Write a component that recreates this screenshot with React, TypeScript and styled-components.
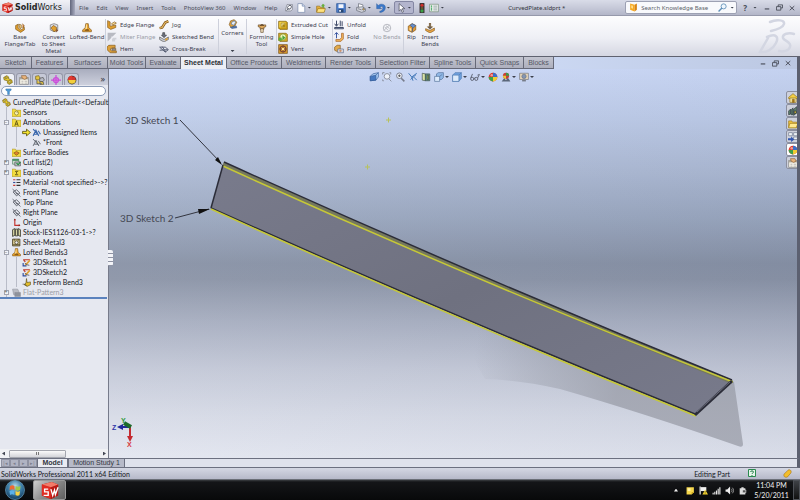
import React from "react";
import styled, { createGlobalStyle, css } from "styled-components";

const Global = createGlobalStyle`
  * { box-sizing: border-box; }
  html, body { margin: 0; padding: 0; background: #0b0c0e; }
  body { font-family: "Noto Sans", "Liberation Sans", sans-serif; font-size: 6px; color: #33363f; }
  button, input { font: inherit; color: inherit; margin: 0; padding: 0; border: 0; background: none; }
  ul { list-style: none; margin: 0; padding: 0; }
  svg { display: block; }
`;

/* ---------- icons ---------- */

const gold = "#e0a030";
const brown = "#7d5316";
const dark = "#474b57";

const glyphs: Record<string, React.ReactNode> = {
  flange: (
    <g stroke={brown} strokeWidth="1">
      <path d="M1 4l4-2v6l4 3 4-2V6l2 1v4l-6 4-8-5z" fill={gold} />
      <path d="M6 2l4 1v5L8 9z" fill="#f7d88a" />
      <path d="M12 1l3 4-3 2" fill="#d87a2c" />
    </g>
  ),
  convert: (
    <g strokeWidth="1">
      <path d="M2 3l6-2 6 2v8l-6 3-6-3z" fill="#d9d9df" stroke="#666" />
      <path d="M3 8l4-4 5 3v5l-4 2z" fill={gold} stroke={brown} />
      <path d="M11 9l4 3-4 3" fill="#8a5a3a" />
    </g>
  ),
  loft: (
    <g stroke={brown} strokeWidth="1">
      <path d="M6 1h4l1 7 4 3v3H1v-3l4-3z" fill="#e9a32e" />
      <path d="M7 2h1v9H5z" fill="#ffe29a" stroke="none" />
      <path d="M5 12a3 2 0 016 0z" fill="#8a5310" />
    </g>
  ),
  edge: (
    <g stroke={brown} strokeWidth="1">
      <path d="M1 1l4 2v7l9-2v4l-8 3-5-3z" fill={gold} />
      <path d="M7 6l5-3 3 2-6 3z" fill="#f9dc92" />
    </g>
  ),
  miter: (
    <g fill="#b8bac2">
      <path d="M1 1h14L9 7H7v2l-6 6z" />
      <path d="M10 9h5v3h-2v3H8v-4z" fill="#cfd1d8" />
    </g>
  ),
  hem: (
    <g stroke={brown} strokeWidth="1">
      <path d="M6 2a5 5 0 00-4 9l3 3h10v-3H7L5 8l4-2h4V2z" fill="#dda03a" />
      <path d="M8 7h6v3H8z" fill="#8b93a8" />
    </g>
  ),
  jog: (
    <g fill="none" strokeLinejoin="round">
      <path d="M1 13l4-1 5-8 5-2" stroke={brown} strokeWidth="4" />
      <path d="M1 13l4-1 5-8 5-2" stroke="#e6b965" strokeWidth="2" />
    </g>
  ),
  bend: (
    <g strokeWidth="1">
      <path d="M6 1h3v4h3l-4 4-4-4h2z" fill="#6e7485" stroke="#333" />
      <path d="M1 8l7 4 7-4v4l-7 4-7-4z" fill="#c9cbd2" stroke="#555" />
      <path d="M10 11l4-2v3l-4 2z" fill={gold} />
    </g>
  ),
  cross: (
    <g fill="none" stroke="#525a70" strokeWidth="1.5">
      <path d="M1 5h9l5 4-5 4L1 5zM1 10l13-1M5 4l6 9" />
    </g>
  ),
  corners: (
    <g strokeWidth="1">
      <path d="M2 9l2-6 6-2 4 4-3 6-6 3z" fill="#e2a43d" stroke={brown} />
      <path d="M5 8l2-4 4-1 1 3-3 4z" fill="#e7eef9" stroke="#4671a5" />
      <path d="M4 13l9-2 1 3-8 1z" fill="#577bb0" stroke="#35558a" />
    </g>
  ),
  forming: (
    <g stroke="#5d4222" strokeWidth="1">
      <path d="M2 3h12v3l-3 1v3H5V7L2 6z" fill="#dca75b" />
      <path d="M6 9h4v6H6z" fill="#f3e3c3" />
      <path d="M5 4l3-2 3 2z" fill="#72593b" />
    </g>
  ),
  cut: (
    <g strokeWidth="1">
      <path d="M1 2h12l2 2v11H3l-2-2z" fill="#c89b18" stroke="#765a08" />
      <path d="M2 3h10v9H2z" fill="#f4d549" />
      <path d="M5 5h6v6H5z" fill="#fff6b8" stroke="#8d6c0e" />
      <path d="M7 7h4v4H7z" fill="#a8830e" />
    </g>
  ),
  hole: (
    <g strokeWidth="1">
      <path d="M1 2h12l2 2v11H3l-2-2z" fill="#d6ab26" stroke="#765a08" />
      <circle cx="8" cy="8" r="5" fill="#eff4b7" stroke="#7c8b22" />
      <path d="M7 5l5 4-5 4z" fill="#48a23a" />
      <path d="M1 9h5v5H1z" fill="#5cac3e" />
    </g>
  ),
  vent: (
    <g strokeWidth="1">
      <path d="M1 1h14v14H1z" fill="#d99b2b" stroke="#6f4610" />
      <circle cx="8" cy="8" r="5" fill="none" stroke="#633" strokeWidth="1.5" />
      <path d="M3 8h10M8 3v10" stroke="#633" strokeWidth="1.5" />
      <circle cx="8" cy="8" r="2" fill="#ffe39a" />
    </g>
  ),
  unfold: (
    <g strokeWidth="1.5" fill="none" stroke="#34405e">
      <path d="M4 1v8M1 6l3 4 3-4M10 1v9M13 2v8" />
      <path d="M1 12h14v2H1z" fill="#dbe2f1" />
    </g>
  ),
  fold: (
    <g strokeWidth="1.5" fill="none">
      <path d="M4 10V1M1 4l3-3 3 3" stroke="#2e4c9b" />
      <path d="M3 12h6l3-3V2h3v9l-4 4H3z" fill="#f0b45a" stroke="#a15a20" strokeWidth="1" />
    </g>
  ),
  flatten: (
    <g strokeWidth="1">
      <path d="M1 5l4-3h5v7l-5 3-4-2z" fill="#e3aa4c" stroke={brown} />
      <path d="M6 8h9v6H6z" fill="#dfe3ee" stroke="#55607d" />
      <path d="M8 11h5M10 9v4" stroke="#c36a2b" />
    </g>
  ),
  nobends: (
    <g fill="none" stroke="#b4b6be" strokeWidth="1.5">
      <circle cx="8" cy="8" r="6" />
      <path d="M3 12L12 3M4 6l6 6M6 4l6 5" />
    </g>
  ),
  rip: (
    <g strokeWidth="1">
      <path d="M2 5l6-4 6 3v7l-6 4-6-3z" fill="#e29a36" stroke={brown} />
      <path d="M8 1l6 3-5 5-1 5 1-7-4-3z" fill="#668fcc" stroke="#35558a" />
      <path d="M4 7l3 2v4l-3-2z" fill="#ffe1a0" />
    </g>
  ),
  insert: (
    <g stroke={brown} strokeWidth="1">
      <path d="M7 0h2v6h3l-4 4-4-4h3z" fill="#5a5f6e" />
      <path d="M1 9l7 3 7-4v4l-7 4-7-4z" fill="#eaa545" />
    </g>
  ),
  pin: (
    <g stroke="#6a6e7a" strokeWidth="1">
      <path d="M4 1h11v10l-3 3H1v-3z" fill="#dcdee6" />
      <path d="M8 3h4l1 3-3 4H6L5 7z" fill="#fff" stroke="#444855" strokeWidth="1.5" />
      <path d="M7 9l-4 4" stroke="#444855" strokeWidth="1.5" />
    </g>
  ),
  page: (
    <g strokeWidth="1">
      <path d="M3 1h7l4 4v10H3z" fill="#fff" stroke="#6c7fa3" />
      <path d="M10 1v4h4" fill="#cfdcf3" stroke="#6c7fa3" />
    </g>
  ),
  open: (
    <g strokeWidth="1">
      <path d="M1 5h5l1 2h6v7H1z" fill="#e7b03b" stroke="#96701c" />
      <path d="M3 9h12l-2 6H1z" fill="#ffe27d" stroke="#96701c" />
      <path d="M8 5l3-4 4 3h-2v3h-3V5z" fill="#66ae3f" />
    </g>
  ),
  save: (
    <g strokeWidth="1">
      <path d="M1 1h14v14H1z" fill="#4d7fce" stroke="#28508f" />
      <path d="M4 2h8v6H4z" fill="#f3f6fc" />
      <path d="M4 10h8v5H4z" fill="#28466f" />
      <path d="M5 11h3v3H5z" fill="#dfe7f5" />
    </g>
  ),
  print: (
    <g stroke="#5b606c" strokeWidth="1">
      <path d="M4 1l7 2v5H4z" fill="#fff" />
      <path d="M1 7l9-1 5 3v4l-6 2-8-3z" fill="#d4d6de" />
      <path d="M3 9l6 2" />
      <circle cx="12" cy="10" r="1.5" fill="#e4ac3b" />
    </g>
  ),
  undo: (
    <path d="M1 1v8h8L6 6.500C8 5 11 5 11 8c0 3-3 5-5 5v2c5 0 9-3 9-8S8 0 3.500 4z" fill="#3b78c9" stroke="#235494" strokeWidth=".6" />
  ),
  cursor: <path d="M5 1v12l3-3 2 5 2-1-2-5h4z" fill="#fff" stroke="#3a3d49" strokeWidth="1" />,
  traffic: (
    <g>
      <rect x="4" y="0" width="8" height="16" rx="1" fill="#3e3638" />
      <circle cx="8" cy="3.500" r="2.500" fill="#d0302c" />
      <circle cx="8" cy="8" r="1.600" fill="#75632c" />
      <circle cx="8" cy="12.500" r="2.500" fill="#3ba045" />
    </g>
  ),
  options: (
    <g>
      <path d="M1 2h14v12H1z" fill="#eef3ee" stroke="#6c8470" />
      <path d="M3 5h2M3 8h2M3 11h2" stroke="#2b9a50" strokeWidth="2" />
      <path d="M7 5h6M7 8h6M7 11h6" stroke="#6d7a86" />
    </g>
  ),
  book: (
    <g>
      <path d="M2 1l8 2v12l-8-3z" fill="#f7a91f" />
      <path d="M10 3l4-2v11l-4 3z" fill="#d98413" />
      <path d="M4 4l3 1v5l-3-1z" fill="#ffe097" />
    </g>
  ),
  lens: (
    <g fill="none" stroke="#5f8fb8">
      <circle cx="10" cy="6" r="4.500" strokeWidth="1.500" fill="#eef6fd" />
      <path d="M7 9l-6 6" strokeWidth="2.500" />
    </g>
  ),
  min: <path d="M2 9h12v3H2z" fill={dark} />,
  restore: (
    <g fill="none" stroke={dark} strokeWidth="2">
      <path d="M5 6V2h10v7h-4M1 6h10v8H1z" />
    </g>
  ),
  close: <path d="M2 3l12 11M14 3L2 14" stroke={dark} strokeWidth="2.500" />,
  part: (
    <g stroke="#69580e" strokeWidth="1">
      <path d="M1 4l5-3 3 2v3l5 2 1 4-5 3-3-2V9L2 8z" fill="#e9cb2e" />
      <path d="M3 4l3-1 1 2-3 1zM9 9l3 0 1 3-3 1z" fill="#fff3a3" />
    </g>
  ),
  property: (
    <g strokeWidth="1">
      <path d="M1 4h14v11H1z" fill="#f5f1e7" stroke="#777" />
      <path d="M1 4h14v3H1z" fill="#aaa69c" />
      <path d="M4 1h7l2 4-4 2-4-2z" fill="#e9b47b" stroke="#8a5f35" />
      <path d="M4 10h3M4 13h3M9 10h4M9 13h4" stroke="#999" />
    </g>
  ),
  config: (
    <g strokeWidth="1">
      <path d="M1 2l5-1 2 4-2 3-5-1z" fill="#e4c440" stroke="#6b5c16" />
      <path d="M8 5l5-1 2 4-3 3-5-1z" fill="#b9bcc6" stroke="#444" />
      <path d="M3 8v6h8M8 10l5 1 1 4H8z" fill="#e4c440" stroke="#444" />
    </g>
  ),
  dim: (
    <g stroke="#c850d8" strokeWidth="2" fill="#e9a0f0">
      <circle cx="8" cy="8" r="4" />
      <path d="M8 0v16M0 8h16" />
    </g>
  ),
  ball: (
    <g>
      <circle cx="8" cy="8" r="7" fill="#e0392e" />
      <path d="M8 8V1a7 7 0 017 7z" fill="#3a70c9" />
      <path d="M8 8h7a7 7 0 01-7 7z" fill="#f0ce33" />
      <path d="M8 8v7a7 7 0 01-7-7z" fill="#3ea04b" />
      <circle cx="6" cy="5" r="2" fill="#fff" opacity=".5" />
    </g>
  ),
  display: (
    <g>
      <circle cx="8" cy="8" r="7" fill="#2d2a2a" />
      <path d="M8 8V1a7 7 0 00-7 7z" fill="#e03a30" />
      <path d="M8 8h6a6 6 0 01-12 0z" fill="#f3cf3c" />
      <path d="M8 8V2a6 6 0 016 6z" fill="#d7342c" />
    </g>
  ),
  funnel: <path d="M2 2h12v3l-4 3v7H6V8L2 5z" fill="#4f9bd6" stroke="#2b6aa5" strokeWidth="1" />,
  folder: (
    <g>
      <path d="M0 2h6l1 2h9v11H0z" fill="#f2dc3e" stroke="#a78f16" strokeWidth="1" />
      <path d="M5 14l3-9 3 9M6 11h4" fill="none" stroke="#554b12" strokeWidth="1.500" />
    </g>
  ),
  sensor: (
    <g>
      <path d="M0 2h6l1 2h9v11H0z" fill="#f2dc3e" stroke="#a78f16" strokeWidth="1" />
      <circle cx="8" cy="9" r="3.500" fill="#fff8b8" stroke="#6b5c14" />
      <path d="M8 9l2-2" stroke="#6b5c14" />
    </g>
  ),
  surface: (
    <g>
      <path d="M0 2h6l1 2h9v11H0z" fill="#f2dc3e" stroke="#a78f16" strokeWidth="1" />
      <path d="M3 9l5-3 5 3-5 4z" fill="#dd8428" stroke="#6b4314" />
    </g>
  ),
  sigma: (
    <g>
      <path d="M0 2h6l1 2h9v11H0z" fill="#f2dc3e" stroke="#a78f16" strokeWidth="1" />
      <path d="M11 6H6l3 3-3 3h5" fill="none" stroke="#554b12" strokeWidth="1.500" />
    </g>
  ),
  arrow: <path d="M1 6h7V2l7 6-7 6v-4H1z" fill="#f5e32e" stroke="#5e560e" strokeWidth="1.500" />,
  note: (
    <g fill="none" strokeWidth="2" stroke="#3a67ad">
      <path d="M2 2l10 11M2 14l5-10 5 10M4 11h6M11 5l4 6" />
    </g>
  ),
  noteDark: (
    <g fill="none" strokeWidth="1.500" stroke="#50555f">
      <path d="M2 2l10 11M2 14l5-10 5 10M4 11h6M11 5l4 6" />
    </g>
  ),
  cutlist: (
    <g strokeWidth="1">
      <path d="M1 2h11v9H1z" fill="#cfe3d4" stroke="#356f4b" />
      <path d="M1 2h11v3H1z" fill="#3f8a5c" />
      <path d="M5 7h10v7H5z" fill="#b9bdc8" stroke="#444" />
      <path d="M8 9l3 3 4-5" fill="none" stroke="#1d8b39" strokeWidth="2" />
    </g>
  ),
  material: (
    <g strokeWidth="2">
      <path d="M2 3h4M2 13h4" stroke="#c93a32" />
      <path d="M2 8h4" stroke="#2e4c9b" />
      <path d="M8 3h7M8 8h7M8 13h7" stroke="#333" />
    </g>
  ),
  plane: (
    <g fill="none" stroke="#4f535e" strokeWidth="1.500">
      <path d="M2 7l6-4 6 6-6 5zM1 2l14 13M6 8l3 3 2-2" />
    </g>
  ),
  origin: (
    <g fill="none" strokeWidth="2">
      <path d="M5 2v11h9" stroke="#c2312d" />
      <path d="M5 1l-2 3h4zM15 13l-3-2v4z" fill="#8a2320" />
    </g>
  ),
  stock: (
    <g stroke="#3b3b31" strokeWidth="1.500">
      <path d="M1 3l4-2v12l-4 2zM6 2h4v12H6zM11 1l4 2v12l-4-2z" fill="#d8d6a4" />
    </g>
  ),
  sheet: (
    <g stroke="#4a3f21" strokeWidth="1.500">
      <path d="M1 2h13v12H1z" fill="#d8cb90" />
      <circle cx="8" cy="8" r="3" fill="#eee" />
      <path d="M4 2v3M11 2v3M2 12h12" />
    </g>
  ),
  sketch: (
    <g fill="none" strokeWidth="2">
      <path d="M2 3h12M3 4l3 3" stroke="#c0392b" />
      <path d="M6 13L14 4" stroke="#e0a030" strokeWidth="3" />
      <path d="M5 9l4 3 4 1" stroke="#555" strokeWidth="1.500" />
      <path d="M1 14h7M2 9v5" stroke="#2e4c9b" />
    </g>
  ),
  freeform: (
    <g stroke="#4f4312" strokeWidth="1">
      <path d="M8 1l1 7 6-1v5l-6 3-5-3 3-3z" fill="#e3bd2b" />
      <path d="M1 11h5l2 3" fill="none" stroke="#333" />
    </g>
  ),
  flat: (
    <g fill="#b9bbc3" stroke="#8c8f99" strokeWidth="1">
      <path d="M1 2h9l2 4v6H3z" />
      <path d="M5 8h10v7H5z" fill="#8f929b" />
    </g>
  ),
  section: (
    <g stroke="#2e5794" strokeWidth="1">
      <path d="M2 7l4-4 9-2v7l-4 5-9 1z" fill="#a9cbf2" />
      <path d="M2 7l9-2v8l-9 1z" fill="#4679c0" />
      <path d="M11 5l4-4" />
    </g>
  ),
  zoomFit: (
    <g fill="none" stroke="#8a8f9d" strokeWidth="1.500">
      <circle cx="8" cy="7" r="4.500" fill="#eef2fa" />
      <path d="M11 11l4 4M1 1h3M1 1v3M12 1h2v3M1 12v2h2" />
    </g>
  ),
  zoomArea: (
    <g fill="none" stroke="#777c8c" strokeWidth="1.500">
      <circle cx="7" cy="6" r="4.500" fill="#eef2fa" />
      <path d="M10 10l5 5" strokeWidth="2.500" />
      <path d="M5 6h4M7 4v4" stroke="#555" />
    </g>
  ),
  prev: (
    <g fill="none" stroke="#3d73b4" strokeWidth="1.500">
      <path d="M1 2l5 6 8-6M6 8l2 6M9 8l5 5M4 12l9-8" />
    </g>
  ),
  cutview: (
    <g stroke="#3a4a45" strokeWidth="1">
      <path d="M2 2l5 1v11l-5-1z" fill="#d9e3a6" />
      <path d="M7 3h7v11H7z" fill="#5d8b7b" />
      <path d="M10 5h2v7h-2z" fill="#b9c94a" />
    </g>
  ),
  cube: (
    <g stroke="#4b76ad" strokeWidth="1">
      <path d="M1 5l4-4h10v9l-4 5H1z" fill="#6fa0de" />
      <path d="M1 5h10v10H1z" fill="#dceafb" />
      <path d="M11 5l4-4" />
    </g>
  ),
  cubes: (
    <g stroke="#4b6a94" strokeWidth="1">
      <path d="M4 3l3-2h8v8l-3 3H4z" fill="#8fb7e6" />
      <path d="M1 7h8v8H1z" fill="#dceafb" />
      <path d="M9 7l4-3" />
    </g>
  ),
  glasses: (
    <g fill="none" stroke="#5d6272" strokeWidth="1.500">
      <circle cx="3.500" cy="11" r="2.500" />
      <circle cx="10" cy="11" r="2.500" />
      <path d="M1 10L4 3M12 10l3-6-3 1M6 10h2" />
    </g>
  ),
  scene: (
    <g>
      <circle cx="8" cy="6" r="5" fill="#c94137" />
      <path d="M8 6V1a5 5 0 015 5z" fill="#3b9a49" />
      <path d="M8 6H3a5 5 0 005 5z" fill="#e8c63a" />
      <path d="M1 15l4-5 3 3 3-4 4 6z" fill="#5a6678" />
    </g>
  ),
  monitor: (
    <g stroke="#6b6f79" strokeWidth="1">
      <path d="M1 2h14v10H1z" fill="#e7d6b9" />
      <circle cx="8" cy="7" r="3.500" fill="#8296b5" />
      <path d="M5 14h6" strokeWidth="2" />
    </g>
  ),
  home: (
    <g stroke="#8a6a17" strokeWidth="1">
      <path d="M1 7l7-6 7 6v2H1z" fill="#f4cf45" />
      <path d="M3 8h10v7H3z" fill="#f7e7a5" />
      <path d="M7 10h3v5H7z" fill="#a97514" />
    </g>
  ),
  library: (
    <g stroke="#25303a" strokeWidth="1">
      <path d="M1 8l3-3v8l-3 1zM5 6l3-3v11H5zM9 5l5-4v10l-5 4z" fill="#5d7f6b" />
      <path d="M10 8h3v4h-3z" fill="#e7c33a" />
    </g>
  ),
  folderOpen: (
    <g stroke="#9c7a17" strokeWidth="1">
      <path d="M1 3h5l1 2h7v9H1z" fill="#eec13f" />
      <path d="M3 7h13l-3 7H1z" fill="#ffe88f" />
    </g>
  ),
  palette: (
    <g>
      <path d="M1 1h6v5H1zM9 1h6v5H9zM9 8h6v4H9z" fill="#eef2f6" stroke="#657089" />
      <path d="M0 10h5V7l5 5-5 4v-3H0z" fill="#3156b0" />
    </g>
  ),
  question: (
    <g>
      <path d="M1 1h14v14H1z" fill="#e6f5ea" stroke="#2b8a4f" strokeWidth="2" />
      <path d="M5 6c0-3 6-3 6 0 0 2-3 2-3 4M8 12v2" fill="none" stroke="#1f7d44" strokeWidth="2" />
    </g>
  ),
  tag: <path d="M2 9l7-7c3-2 7 1 5 5l-6 7c-4 2-8-1-6-5z" fill="#f3be2c" stroke="#a06c0c" strokeWidth="1" />,
  sticky: (
    <g>
      <path d="M1 2h13v9l-4 4H1z" fill="#f5d64b" />
      <path d="M3 4h5v5H3z" fill="#fff3a8" />
      <path d="M10 15v-4h4z" fill="#b8920f" />
    </g>
  ),
  flag: (
    <g>
      <path d="M2 1v14" stroke="#fff" strokeWidth="2" />
      <path d="M3 2h10v7H3z" fill="#f1f1f1" />
      <path d="M11 6l5 9H6z" fill="#f5d32c" />
      <path d="M11 9v3M11 13v1" stroke="#333" />
    </g>
  ),
  signal: <path d="M1 12h2v3H1zM4 10h2v5H4zM7 8h2v7H7zM10 5h2v10h-2zM13 2h2v13h-2z" fill="#e8e8e8" />,
  sound: (
    <g>
      <path d="M1 6h3l5-5v14l-5-5H1z" fill="#eee" />
      <path d="M11 5c2 2 2 4 0 6M13 3c3 3 3 7 0 10" fill="none" stroke="#bbb" strokeWidth="1.300" />
    </g>
  ),
  battery: (
    <g>
      <path d="M3 4h3V2h4v2h3v11H3z" fill="#ddd" />
      <path d="M8 7h6v5H8z" fill="#555" stroke="#eee" />
    </g>
  ),
};

const Glyph = styled.svg<{ $size: number }>`
  flex: none;
  width: ${(p) => p.$size}px;
  height: ${(p) => p.$size}px;
`;

const Icon = ({ name, size = 9 }: { name: string; size?: number }) => (
  <Glyph $size={size} viewBox="0 0 16 16" aria-hidden="true">
    {glyphs[name]}
  </Glyph>
);

const Caret = styled.span`
  flex: none;
  width: 4px;
  height: 2px;
  background: #3c404c;
  clip-path: polygon(0 0, 100% 0, 50% 100%);
`;

/* ---------- shell ---------- */

const Shell = styled.div`
  display: flex;
  flex-direction: column;
  min-height: 100vh;
`;

/* ---------- title bar ---------- */

const TitleBar = styled.header`
  display: flex;
  align-items: center;
  height: 16px;
  background: linear-gradient(#d9dce8, #c3c6d6 60%, #b3b6c8);
  border-bottom: 1px solid #9699ab;
`;

const Brand = styled.div`
  display: flex;
  align-items: center;
  gap: 2px;
  width: 70px;
  height: 100%;
  padding-left: 2px;
  background: linear-gradient(#f1f2f7, #cfd2df);
  font: 8px/15px "DejaVu Sans", sans-serif;
  color: #222;
`;

const BrandDivider = styled.div`
  width: 5px;
  height: 100%;
  background: linear-gradient(90deg, #62667c, #a8abbf);
`;

const Menu = styled.nav`
  display: flex;
  align-items: center;
  gap: 8px;
  padding: 0 2px 0 4px;
  color: #4b4e5a;
`;

const QuickBar = styled.div`
  display: flex;
  align-items: center;
`;

const QuickButton = styled.button<{ $pressed?: boolean; $w: number }>`
  display: flex;
  align-items: center;
  justify-content: space-between;
  width: ${(p) => p.$w}px;
  height: 13px;
  padding: 0 2px 0 1px;
  margin-right: ${(p) => (p.$w > 14 ? 2 : 0)}px;
  ${(p) =>
    p.$pressed &&
    css`
      background: #b3b5cd;
      border: 1px solid #8487a3;
      border-radius: 2px;
    `}
`;

const DocTitle = styled.div`
  flex: 1;
  text-align: center;
  color: #333640;
`;

const Search = styled.label`
  display: flex;
  align-items: center;
  gap: 3px;
  width: 112px;
  height: 13px;
  padding: 0 2px 0 3px;
  background: #f8f9fc;
  border: 1px solid #9da1b3;
  border-radius: 2px;
`;

const SearchInput = styled.input`
  flex: 1;
  min-width: 0;
  outline: 0;
  &::placeholder { color: #5c5f69; opacity: 1; }
`;

const WindowButtons = styled.div<{ $end: number }>`
  display: flex;
  align-items: center;
  gap: 6px;
  padding: 0 ${(p) => p.$end}px 0 6px;
`;

const BareButton = styled.button`
  display: flex;
  align-items: center;
  justify-content: center;
`;

const HelpButton = styled(BareButton)`
  gap: 6px;
  margin-right: 1px;
  font-weight: 700;
  font-size: 8px;
  color: ${dark};
`;

/* ---------- ribbon ---------- */

const Ribbon = styled.div`
  display: flex;
  height: 41px;
  padding: 3px 4px 2px 2px;
  background: linear-gradient(#fdfdfe, #eeeff5 55%, #d5d7e2);
  border-bottom: 1px solid #5f6270;
`;

const BigButton = styled.button<{ $w: number; $muted?: boolean; $top?: number }>`
  display: flex;
  flex-direction: column;
  align-items: center;
  width: ${(p) => p.$w}px;
  padding-top: ${(p) => p.$top ?? 4}px;
  line-height: 7px;
  text-align: center;
  white-space: pre;
  color: ${(p) => (p.$muted ? "#9a9ca6" : "#3c4050")};
  & > svg { margin-bottom: 1px; }
`;

const CaretDrop = styled(Caret)`
  margin-top: 13px;
`;

const Stack = styled.div<{ $w: number }>`
  display: grid;
  grid-template-rows: repeat(3, 12px);
  align-content: center;
  width: ${(p) => p.$w}px;
`;

const SmallButton = styled.button<{ $muted?: boolean }>`
  display: flex;
  align-items: center;
  gap: 3px;
  padding-left: 1px;
  white-space: nowrap;
  color: ${(p) => (p.$muted ? "#9a9ca6" : "#3c4050")};
`;

const Rule = styled.div`
  width: 1px;
  background: #cdd0db;
`;

const Spacer = styled.div`
  flex: 1;
`;

/* ---------- command tabs ---------- */

const TabStrip = styled.div`
  display: flex;
  height: 12px;
  background: linear-gradient(90deg, #cfdcf7 60%, #bcc8e2);
  border-right: 3px solid #5c6070;
`;

const CommandTab = styled.button<{ $w: number; $active?: boolean }>`
  width: ${(p) => p.$w}px;
  font: ${(p) => (p.$active ? 700 : 400)} 7px/11px "Liberation Sans", sans-serif;
  white-space: nowrap;
  color: ${(p) => (p.$active ? "#2c2e36" : "#555866")};
  background: ${(p) => (p.$active ? "#eceef5" : "linear-gradient(#c3c5d0, #adafbd)")};
  border-right: 1px solid #666978;
  border-bottom: 1px solid ${(p) => (p.$active ? "#eceef5" : "#666978")};
`;

/* ---------- workspace ---------- */

const Workspace = styled.main`
  display: flex;
  flex: 1;
`;

const Panel = styled.aside`
  position: relative;
  z-index: 1;
  display: flex;
  flex-direction: column;
  flex: 0 0 109px;
  width: 109px;
  background: #e6e8f0;
  border-right: 1px solid #777b8b;
`;

const PanelTabs = styled.div`
  display: flex;
  align-items: flex-end;
  height: 16px;
  background: linear-gradient(#a9adbe, #cdd0dd);
`;

const PanelTab = styled.button<{ $active?: boolean }>`
  display: flex;
  align-items: center;
  justify-content: center;
  width: 15px;
  height: 12px;
  margin-right: 1px;
  border: 1px solid #9699a9;
  border-bottom: 0;
  border-radius: 3px 3px 0 0;
  background: ${(p) => (p.$active ? "#eef0f6" : "#c6c9d7")};
`;

const More = styled(BareButton)`
  margin-left: auto;
  padding: 0 3px 0 0;
  font-size: 9px;
  line-height: 12px;
`;

const Filter = styled.label`
  display: flex;
  align-items: center;
  gap: 3px;
  height: 10px;
  margin: 1px 2px 1px 1px;
  padding-left: 3px;
  background: #fff;
  border: 1px solid #8c9cb8;
  border-radius: 5px;
`;

const Tree = styled.ul`
  flex: 1;
  padding-left: 1px;
  font: 7px/10px Lato, "Noto Sans", sans-serif;
  color: #15171c;
`;

const TreeRow = styled.li<{ $muted?: boolean }>`
  display: flex;
  align-items: center;
  height: 10px;
  white-space: nowrap;
  color: ${(p) => (p.$muted ? "#9b9da6" : "inherit")};
  & > svg { margin-left: 1px; }
`;

const Label = styled.span`
  margin-left: 2px;
`;

const Guide = styled.span<{ $line?: boolean }>`
  display: flex;
  align-items: center;
  justify-content: center;
  flex: none;
  width: 10px;
  height: 10px;
  background: ${(p) =>
    p.$line ? "linear-gradient(#b9bcc8, #b9bcc8) 5px 0 / 1px 100% no-repeat" : "none"};
`;

const Toggle = styled.button`
  width: 5px;
  height: 5px;
  background: #f3f4f8;
  border: 1px solid #a2a5b1;
  font-size: 5px;
  line-height: 3px;
  color: #555;
`;

const Rollback = styled.li`
  height: 2px;
  margin: 0 1px 0 -1px;
  background: #5b82bd;
`;

const SplitHandle = styled.button`
  position: absolute;
  right: -5px;
  top: 181px;
  width: 5px;
  height: 16px;
  background: repeating-linear-gradient(#f3f4f8 0 3px, #8f93a4 3px 4px);
  border-radius: 0 2px 2px 0;
`;

const ScrollBar = styled.div`
  display: flex;
  align-items: center;
  justify-content: space-between;
  height: 9px;
  padding: 0 2px;
  background: #f0f1f4;
`;

const Thumb = styled.div`
  width: 57px;
  height: 8px;
  margin: 0 auto 0 4px;
  border: 1px solid #a4a6ae;
  border-radius: 1px;
  background: repeating-linear-gradient(90deg, #777 0 1px, transparent 1px 2px) center / 4px 3px no-repeat,
    linear-gradient(#fafafa, #d3d4d9);
`;

const ScrollArrow = styled.button<{ $right?: boolean }>`
  width: 3px;
  height: 4px;
  background: #444854;
  clip-path: ${(p) => (p.$right ? "polygon(0 0, 100% 50%, 0 100%)" : "polygon(100% 0, 0 50%, 100% 100%)")};
`;

const Viewport = styled.section`
  position: relative;
  flex: 1;
  overflow: hidden;
  border-right: 3px solid #5c6070;
  background: linear-gradient(90deg, rgba(255, 255, 255, 0.06), rgba(60, 75, 110, 0.06)),
    linear-gradient(
      #cddaf8 0,
      #bfcdea 12%,
      #adbad4 26%,
      #9aa7bf 38%,
      #8791a5 50%,
      #8a93a6 54%,
      #a7aec0 65%,
      #c3c8d7 77%,
      #d6dae6 89%,
      #e3e6f0 100%
    );
`;

const Scene = styled.svg`
  position: absolute;
  inset: 0;
  width: 100%;
  height: 100%;
`;

const HeadsUp = styled.div`
  position: absolute;
  top: 2px;
  left: 0;
  right: 0;
  display: flex;
  justify-content: center;
`;

const HeadsUpButton = styled.button<{ $drop?: boolean }>`
  display: flex;
  align-items: center;
  gap: 1px;
  width: ${(p) => (p.$drop ? 18 : 13)}px;
  height: 12px;
`;

const TaskPane = styled.div`
  position: absolute;
  right: -3px;
  top: 22px;
  display: grid;
  grid-auto-rows: 13px;
`;

const TaskTab = styled.button<{ $active?: boolean }>`
  display: flex;
  align-items: center;
  justify-content: center;
  width: 14px;
  background: ${(p) => (p.$active ? "#ffffff" : "#ced1dc")};
  border: 1px solid #8b8f9f;
  border-radius: 2px 0 0 2px;
`;

/* ---------- footer ---------- */

const ModelTabs = styled.div`
  display: flex;
  align-items: stretch;
  height: 10px;
  padding-left: 1px;
  background: #dfe2ec;
  border-top: 1px solid #6c7080;
  border-right: 3px solid #5c6070;
  border-bottom: 1px solid #6c7080;
`;

const NavButton = styled.button`
  width: 9px;
  background: #b0b3c2;
  border: 1px solid #8f92a2;
  font-size: 5px;
  line-height: 5px;
  color: #7c7f8e;
`;

const ModelTab = styled.button<{ $active?: boolean; $w: number }>`
  width: ${(p) => p.$w}px;
  font: ${(p) => (p.$active ? 700 : 400)} 7px/8px "Liberation Sans", sans-serif;
  background: ${(p) => (p.$active ? "#e9ebf2" : "#b7bac8")};
  border-left: 1px solid #6c7080;
  border-right: 1px solid #6c7080;
  white-space: nowrap;
`;

const Status = styled.footer`
  display: flex;
  align-items: center;
  height: 11px;
  padding: 0 8px 0 1px;
  background: linear-gradient(#d4d7e3, #b6b9c9);
  font: 7px/10px Lato, "Noto Sans", sans-serif;
  color: #15171c;
`;

const StatusMode = styled.span`
  margin: 0 18px 0 auto;
`;

const StatusIcons = styled.div`
  display: flex;
  gap: 27px;
`;

const TaskBar = styled.div`
  display: flex;
  align-items: center;
  height: 21px;
  background: linear-gradient(#3a3d41, #141518 10%, #08090a);
  border-top: 1px solid #6b6f78;
  color: #f2f2f2;
`;

const StartButton = styled(BareButton)`
  width: 30px;
  margin-right: 3px;
`;

const AppButton = styled(BareButton)`
  width: 33px;
  height: 20px;
  border: 1px solid #999;
  border-radius: 2px;
  background: linear-gradient(135deg, #cfcfcf, #8c8c8c 50%, #5e5e5e);
`;

const Tray = styled.div`
  display: flex;
  align-items: center;
  gap: 4px;
  margin-left: auto;
`;

const TrayUp = styled(BareButton)`
  width: 4px;
  height: 3px;
  margin-right: 4px;
  background: #eee;
  clip-path: polygon(50% 0, 100% 100%, 0 100%);
`;

const Clock = styled.time`
  width: 41px;
  font: 7px/10px Lato, sans-serif;
  text-align: center;
`;

const ShowDesktop = styled.button`
  width: 7px;
  height: 20px;
  margin-left: -3px;
  border: 1px solid #4d5056;
  background: linear-gradient(#3e4146, #111);
`;

/* ---------- data ---------- */

const menus = ["File", "Edit", "View", "Insert", "Tools", "PhotoView 360", "Window", "Help"];

const quick = [
  { icon: "page", label: "New", w: 18 },
  { icon: "open", label: "Open", w: 18 },
  { icon: "save", label: "Save", w: 18 },
  { icon: "print", label: "Print", w: 18 },
  { icon: "undo", label: "Undo", w: 17 },
  { icon: "cursor", label: "Select", w: 20, pressed: true },
  { icon: "traffic", label: "Rebuild", w: 12 },
  { icon: "options", label: "Options", w: 18 },
];

const tabs: [string, number][] = [
  ["Sketch", 32], ["Features", 36], ["Surfaces", 40], ["Mold Tools", 38], ["Evaluate", 35],
  ["Sheet Metal", 46], ["Office Products", 55], ["Weldments", 44], ["Render Tools", 50],
  ["Selection Filter", 54], ["Spline Tools", 46], ["Quick Snaps", 48], ["Blocks", 30],
];

type Node = {
  icon: string;
  label: string;
  depth: number;
  toggle?: "+" | "-";
  marker?: boolean;
  indent?: boolean;
  muted?: boolean;
};

const tree: Node[] = [
  { icon: "part", label: "CurvedPlate (Default<<Default", depth: 0 },
  { icon: "sensor", label: "Sensors", depth: 1 },
  { icon: "folder", label: "Annotations", depth: 1, toggle: "-" },
  { icon: "note", label: "Unassigned Items", depth: 2, marker: true },
  { icon: "noteDark", label: "*Front", depth: 2, indent: true },
  { icon: "surface", label: "Surface Bodies", depth: 1 },
  { icon: "cutlist", label: "Cut list(2)", depth: 1, toggle: "+" },
  { icon: "sigma", label: "Equations", depth: 1, toggle: "+" },
  { icon: "material", label: "Material <not specified>->?", depth: 1 },
  { icon: "plane", label: "Front Plane", depth: 1 },
  { icon: "plane", label: "Top Plane", depth: 1 },
  { icon: "plane", label: "Right Plane", depth: 1 },
  { icon: "origin", label: "Origin", depth: 1 },
  { icon: "stock", label: "Stock-IES1126-03-1->?", depth: 1 },
  { icon: "sheet", label: "Sheet-Metal3", depth: 1 },
  { icon: "loft", label: "Lofted Bends3", depth: 1, toggle: "-" },
  { icon: "sketch", label: "3DSketch1", depth: 2 },
  { icon: "sketch", label: "3DSketch2", depth: 2 },
  { icon: "freeform", label: "Freeform Bend3", depth: 2 },
  { icon: "flat", label: "Flat-Pattern3", depth: 1, toggle: "+", muted: true },
];

const headsUp: [string, string, boolean?][] = [
  ["section", "Zoom"], ["zoomFit", "Zoom to Fit"], ["zoomArea", "Zoom to Area"], ["prev", "Previous View"],
  ["cutview", "Section View"], ["cubes", "View Orientation", true], ["cube", "Display Style", true],
  ["glasses", "Hide/Show Items", true], ["ball", "Edit Appearance"], ["scene", "Apply Scene", true],
  ["monitor", "View Settings", true],
];

const taskTabs = ["home", "library", "folderOpen", "palette", "ball", "property"];

/* ---------- pieces ---------- */

const CubeLogo = ({ size }: { size: number }) => (
  <Glyph $size={size} viewBox="0 0 20 20" aria-hidden="true">
    <path d="M1 4l11-3 7 3v12l-8 4-10-4z" fill="#a5120f" />
    <path d="M1 4l10 3v13L1 16z" fill="#e02c22" />
    <path d="M11 7l8-3v12l-8 4z" fill="#b81a15" />
    <path d="M1 4l11-3 7 3-8 3z" fill="#f37a68" />
    <path d="M8 9H4v3h4v4H3" fill="none" stroke="#fff" strokeWidth="1.500" />
    <path d="M11 9l2 7 2-6 1 5 3-8" fill="none" stroke="#fff" strokeWidth="1.500" />
  </Glyph>
);

const StartOrb = () => (
  <Glyph $size={20} viewBox="0 0 20 20" aria-hidden="true">
    <defs>
      <radialGradient id="orb" cx=".5" cy=".3" r=".7">
        <stop offset="0" stopColor="#b8dcec" />
        <stop offset=".5" stopColor="#3f7fa8" />
        <stop offset="1" stopColor="#123a5c" />
      </radialGradient>
    </defs>
    <circle cx="10" cy="10" r="9.500" fill="url(#orb)" stroke="#6b9fbd" strokeWidth=".7" />
    <path d="M5 6c2-1 3-1 4.500 0v4C8 9 7 9 4.500 10z" fill="#ee6a32" />
    <path d="M10.500 6c2 1 3 1 5 0l-.5 4c-2 1-3 1-4.500 0z" fill="#9fcb45" />
    <path d="M4.500 11c2-1 3-1 5 0v4c-2-1-3-1-4.500 0z" fill="#5bb1ea" />
    <path d="M10.500 11c2 1 3 1 4.500 0l-.5 4c-1 1-2.500 1-4 0z" fill="#f9d343" />
  </Glyph>
);

const Watermark = styled.svg`
  width: 38px;
  height: 36px;
`;

const DsMark = () => (
  <Watermark viewBox="0 0 38 36" aria-hidden="true">
    <g fill="none" stroke="#d3d6e2" strokeWidth="2.500" strokeLinecap="round">
      <path d="M12 3c7-3 15-2 14 2-1 4-9 6-13 7" />
      <path d="M9 18c9-4 12 0 9 6-3 6-9 10-16 9l8-14" />
      <path d="M36 15c-5-2-12 0-11 4 1 3 9 4 7 9-1 4-7 5-11 4" />
    </g>
  </Watermark>
);

const Controls = () => (
  <>
    <BareButton aria-label="Minimize"><Icon name="min" size={6} /></BareButton>
    <BareButton aria-label="Restore"><Icon name="restore" size={7} /></BareButton>
    <BareButton aria-label="Close"><Icon name="close" size={6} /></BareButton>
  </>
);

const Big = ({ icon, text, w, muted, top, drop }: {
  icon: string; text: string; w: number; muted?: boolean; top?: number; drop?: boolean;
}) => (
  <BigButton $w={w} $muted={muted} $top={top}>
    <Icon name={icon} size={10} />
    {text}
    {drop && <CaretDrop />}
  </BigButton>
);

const Trio = ({ w, items }: { w: number; items: [string, string, boolean?][] }) => (
  <Stack $w={w}>
    {items.map(([icon, text, muted]) => (
      <SmallButton key={text} $muted={muted}>
        <Icon name={icon} size={10} />
        {text}
      </SmallButton>
    ))}
  </Stack>
);

const Model = () => (
  <Scene viewBox="109 69 688 389" preserveAspectRatio="xMidYMid slice" role="img" aria-label="Curved plate">
    <defs>
      <linearGradient id="shade" x1="475" x2="620" y1="350" y2="370" gradientUnits="userSpaceOnUse">
        <stop offset="0" stopColor="#9296a2" stopOpacity="0" />
        <stop offset=".5" stopColor="#9599a5" stopOpacity=".4" />
        <stop offset="1" stopColor="#999ca7" stopOpacity=".75" />
      </linearGradient>
      <linearGradient id="face" x1="0" x2="1" y1="0" y2="1">
        <stop offset="0" stopColor="#797b8c" />
        <stop offset=".5" stopColor="#6f7180" />
        <stop offset="1" stopColor="#787a8b" />
      </linearGradient>
    </defs>
    <path d="M450 310L734 382L743 444Q743 448 738 446Q640 412 560 389Q520 380 485 379Q468 350 450 310Z" fill="url(#shade)" />
    <path d="M223 164Q480 281 732 381L695 415Q450 316 211 208Z" fill="url(#face)" />
    <g fill="none" strokeLinejoin="round">
      <path d="M223 164Q480 280 732 382" stroke="#75785f" strokeWidth="4" />
      <path d="M224 162Q480 278 732 380" stroke="#2b2c38" strokeWidth="1.500" />
      <path d="M223 166Q480 283 733 382" stroke="#c6c838" strokeWidth="1.500" />
      <path d="M223 165L211 208" stroke="#2b2c38" strokeWidth="1.500" />
      <path d="M211 208Q450 315 695 414" stroke="#2b2c38" strokeWidth="1.500" />
      <path d="M211 209Q450 317 696 416" stroke="#c6c838" strokeWidth="1.500" />
      <path d="M695 415L732 381" stroke="#2b2c38" strokeWidth="3" />
      <path d="M697 412L730 382" stroke="#676977" strokeWidth="1" />
      <path d="M180 120L221 163M175 218L209 209" stroke="#33353f" strokeWidth="1" />
    </g>
    <path d="M222 165L215 160L218 157ZM210 209L199 214L198 209Z" fill="#111" />
    <path d="M386 120h5M388.500 117.500v5M365 167h5M367.500 164.500v5" stroke="#b7c25c" strokeWidth="1" />
    <g fontFamily="Lato, sans-serif" fontSize="10" fill="#454854">
      <text x="125" y="124">3D Sketch 1</text>
      <text x="120" y="222">3D Sketch 2</text>
    </g>
    <g strokeWidth="2" fontFamily="Liberation Sans, sans-serif" fontSize="7" fontWeight="700">
      <path d="M131 427h-9" stroke="#22289a" />
      <path d="M117 427l6-3v6z" fill="#22289a" />
      <path d="M130 427v10" stroke="#c42a30" />
      <path d="M127 436h6l-3 6z" fill="#c42a30" />
      <path d="M131 427l-7-4" stroke="#1d6a2a" strokeWidth="4" />
      <text x="112" y="430" fill="#3036a8">Z</text>
      <text x="121" y="423" fill="#2f9a3b">Y</text>
      <text x="127" y="447" fill="#d8383c">X</text>
    </g>
  </Scene>
);

const FeatureTree = () => (
  <Tree>
    {tree.map((n, i) => (
      <TreeRow key={i} $muted={n.muted}>
        {n.depth > 0 && (
          <Guide $line>
            {n.toggle && <Toggle aria-label={`Toggle ${n.label}`}>{n.toggle === "-" ? "–" : "+"}</Toggle>}
          </Guide>
        )}
        {n.depth > 1 && <Guide $line />}
        {n.marker && <Icon name="arrow" size={9} />}
        {n.indent && <Guide />}
        <Icon name={n.icon} />
        <Label>{n.label}</Label>
      </TreeRow>
    ))}
    <Rollback />
  </Tree>
);

export default function App() {
  return (
    <Shell>
      <Global />
      <TitleBar>
        <Brand>
          <CubeLogo size={11} />
          <span><b>Solid</b>Works</span>
        </Brand>
        <BrandDivider />
        <Menu>
          {menus.map((m) => <button key={m}>{m}</button>)}
          <BareButton aria-label="Pin menu"><Icon name="pin" size={8} /></BareButton>
        </Menu>
        <QuickBar>
          {quick.map((q) => (
            <QuickButton key={q.icon} $w={q.w} $pressed={q.pressed} aria-label={q.label}>
              <Icon name={q.icon} size={10} />
              {q.w > 14 && <Caret />}
            </QuickButton>
          ))}
        </QuickBar>
        <DocTitle>CurvedPlate.sldprt *</DocTitle>
        <Search>
          <Icon name="book" size={9} />
          <SearchInput placeholder="Search Knowledge Base" aria-label="Search Knowledge Base" />
          <Icon name="lens" size={9} />
          <Caret />
        </Search>
        <WindowButtons $end={5}>
          <HelpButton aria-label="Help">?<Caret /></HelpButton>
          <Controls />
        </WindowButtons>
      </TitleBar>

      <Ribbon>
        <Big icon="flange" text={"Base\nFlange/Tab"} w={36} />
        <Big icon="convert" text={"Convert\nto Sheet\nMetal"} w={31} />
        <Big icon="loft" text="Lofted-Bend" w={36} />
        <Rule />
        <Trio w={52} items={[["edge", "Edge Flange"], ["miter", "Miter Flange", true], ["hem", "Hem"]]} />
        <Trio w={60} items={[["jog", "Jog"], ["bend", "Sketched Bend"], ["cross", "Cross-Break"]]} />
        <Rule />
        <Big icon="corners" text="Corners" w={27} top={0} drop />
        <Rule />
        <Big icon="forming" text={"Forming\nTool"} w={29} />
        <Rule />
        <Trio w={55} items={[["cut", "Extruded Cut"], ["hole", "Simple Hole"], ["vent", "Vent"]]} />
        <Rule />
        <Trio w={38} items={[["unfold", "Unfold"], ["fold", "Fold"], ["flatten", "Flatten"]]} />
        <Big icon="nobends" text="No Bends" w={32} muted />
        <Rule />
        <Big icon="rip" text="Rip" w={15} />
        <Big icon="insert" text={"Insert\nBends"} w={22} />
        <Spacer />
        <DsMark />
      </Ribbon>

      <TabStrip>
        {tabs.map(([t, w]) => (
          <CommandTab key={t} $w={w} $active={t === "Sheet Metal"}>{t}</CommandTab>
        ))}
        <Spacer />
        <WindowButtons $end={6}><Controls /></WindowButtons>
      </TabStrip>

      <Workspace>
        <Panel>
          <PanelTabs>
            {["part", "property", "config", "dim", "display"].map((n, i) => (
              <PanelTab key={n} $active={i === 0} aria-label={n}><Icon name={n} size={10} /></PanelTab>
            ))}
            <More aria-label="More tabs">»</More>
          </PanelTabs>
          <Filter>
            <Icon name="funnel" size={7} />
            <SearchInput aria-label="Filter tree" />
          </Filter>
          <FeatureTree />
          <ScrollBar>
            <ScrollArrow aria-label="Scroll left" />
            <Thumb />
            <ScrollArrow $right aria-label="Scroll right" />
          </ScrollBar>
          <SplitHandle aria-label="Collapse panel" />
        </Panel>
        <Viewport>
          <Model />
          <HeadsUp>
            {headsUp.map(([icon, label, drop]) => (
              <HeadsUpButton key={icon} $drop={drop} aria-label={label}>
                <Icon name={icon} size={10} />
                {drop && <Caret />}
              </HeadsUpButton>
            ))}
          </HeadsUp>
          <TaskPane>
            {taskTabs.map((t) => (
              <TaskTab key={t} $active={t === "ball"} aria-label={t}><Icon name={t} size={10} /></TaskTab>
            ))}
          </TaskPane>
        </Viewport>
      </Workspace>

      <ModelTabs>
        {["|◂", "◂", "▸", "▸|"].map((s) => <NavButton key={s}>{s}</NavButton>)}
        <ModelTab $active $w={31}>Model</ModelTab>
        <ModelTab $w={57}>Motion Study 1</ModelTab>
      </ModelTabs>
      <Status>
        <span>SolidWorks Professional 2011 x64 Edition</span>
        <StatusMode>Editing Part</StatusMode>
        <StatusIcons>
          <Icon name="question" size={8} />
          <Icon name="tag" size={9} />
        </StatusIcons>
      </Status>
      <TaskBar>
        <StartButton aria-label="Start"><StartOrb /></StartButton>
        <AppButton aria-label="SolidWorks"><CubeLogo size={18} /></AppButton>
        <Tray>
          <TrayUp aria-label="Show hidden icons" />
          <Icon name="sticky" />
          <Icon name="flag" />
          <Icon name="signal" />
          <Icon name="sound" />
          <Icon name="battery" />
          <Clock>11:04 PM<br />5/20/2011</Clock>
          <ShowDesktop aria-label="Show desktop" />
        </Tray>
      </TaskBar>
    </Shell>
  );
}
